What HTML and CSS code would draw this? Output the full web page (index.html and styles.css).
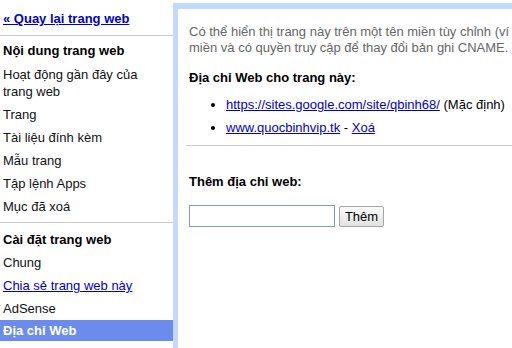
FILE: index.html
```html
<!DOCTYPE html>
<html lang="vi">
<head>
  <meta charset="UTF-8" />
  <title>Địa chỉ Web</title>
  <link rel="stylesheet" href="styles.css">
</head>
<body>

  <!-- Sidebar -->
  <div class="sidebar">
    <div class="back"><a href="#">« Quay lại trang web</a></div>

    <div class="group">
      <h2>Nội dung trang web</h2>
      <div class="item">Hoạt động gần đây của trang web</div>
      <div class="item">Trang</div>
      <div class="item">Tài liệu đính kèm</div>
      <div class="item">Mẫu trang</div>
      <div class="item">Tập lệnh Apps</div>
      <div class="item">Mục đã xoá</div>
    </div>

    <div class="group last">
      <h2>Cài đặt trang web</h2>
      <div class="item">Chung</div>
      <div class="item"><a href="#">Chia sẻ trang web này</a></div>
      <div class="item">AdSense</div>
      <div class="item selected">Địa chỉ Web</div>
    </div>
  </div>

  <!-- Main content -->
  <div class="main">
    <p class="intro">Có thể hiển thị trang này trên một tên miền tùy chỉnh (ví dụ: www.example.com) nếu bạn sở hữu tên<br>miền và có quyền truy cập để thay đổi bản ghi CNAME. <a href="#">Tìm hiểu thêm</a></p>

    <h3>Địa chỉ Web cho trang này:</h3>
    <ul class="urls">
      <li><a href="#">https://sites.google.com/site/qbinh68/</a> (Mặc định)</li>
      <li><a href="#">www.quocbinhvip.tk</a> - <a href="#">Xoá</a></li>
    </ul>

    <hr>

    <h3 class="add-title">Thêm địa chỉ web:</h3>
    <form class="add-form" onsubmit="return false">
      <input type="text" class="url-input">
      <button type="submit" class="add-btn">Thêm</button>
    </form>
  </div>

</body>
</html>
```

FILE: styles.css
```css
:root {
  --link: #0000cc;
  --panel-border: #c3d9ff;
  --selected: #6b8ced;
}

* {
  box-sizing: border-box;
  margin: 0;
  padding: 0;
}

html, body {
  height: 100%;
  overflow: hidden;
}

body {
  font-family: "Liberation Sans", Arial, sans-serif;
  font-size: 13px;
  line-height: 17px;
  color: #000;
  background: #fff;
  display: flex;
}

a {
  color: var(--link);
}

/* Sidebar */
.sidebar {
  width: 173px;
  flex-shrink: 0;
}

.back {
  padding: 10px 3px 8px;
  border-bottom: 1px solid #ccc;
  font-weight: bold;
}

.group {
  padding-bottom: 4px;
  border-bottom: 1px solid #ccc;
}

.group.last {
  border-bottom: none;
}

.group h2 {
  font-size: 13px;
  font-weight: bold;
  padding: 6px 3px 4px;
}

.group.last h2 {
  padding-top: 8px;
  padding-bottom: 3px;
}

.item {
  padding: 3px 3px;
  color: #111;
}

.item.selected {
  background: var(--selected);
  color: #fff;
  font-weight: bold;
  padding: 2px 3px;
}

/* Main panel */
.main {
  flex: 1;
  min-width: 0;
  margin-top: 3px;
  border-top: 6px solid var(--panel-border);
  border-left: 5px solid var(--panel-border);
  padding: 15px 0 0 8px;
  overflow: hidden;
}

.intro {
  margin-left: 3px;
  color: #666;
  line-height: 16px;
  white-space: nowrap;
}

.main h3 {
  font-size: 13px;
  margin: 13px 0 0 3px;
}

.urls {
  margin: 10px 0 0 3px;
  padding-left: 37px;
}

.urls li {
  margin-bottom: 6px;
}

hr {
  border: none;
  border-top: 1px solid #ccc;
  margin-top: 9px;
}

.main h3.add-title {
  margin-top: 27px;
}

.add-form {
  display: flex;
  align-items: center;
  gap: 4px;
  margin: 15px 0 0 3px;
}

.url-input {
  width: 146px;
  height: 22px;
  border: 1px solid #7f9db9;
  font: inherit;
  padding: 1px 3px;
}

.add-btn {
  width: 45px;
  height: 21px;
  font: inherit;
  color: #000;
  border: 1px solid #a5a5a5;
  border-radius: 2px;
  background: linear-gradient(#fafafa, #e2e2e2);
}
```
